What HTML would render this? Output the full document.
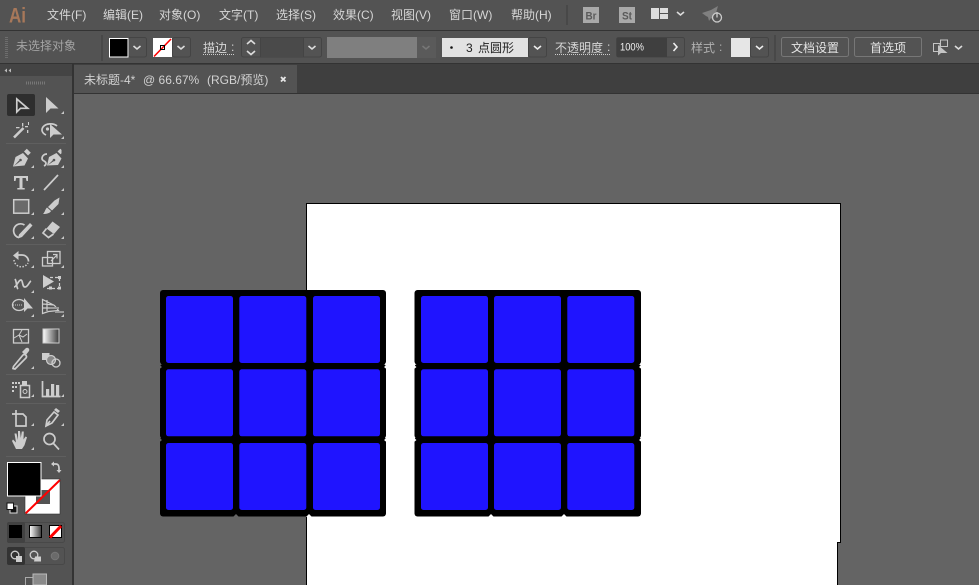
<!DOCTYPE html>
<html><head><meta charset="utf-8"><style>
html,body{margin:0;padding:0;width:979px;height:585px;overflow:hidden;background:#646464}
svg{display:block}
text{font-family:"Liberation Sans","Noto Sans CJK SC",sans-serif;font-size:12px;fill:#d6d6d6}
.o{fill:none;stroke:#cdcdcd;stroke-width:1.7}
.t{fill:none;stroke:#cdcdcd;stroke-width:1}
.c{fill:none;stroke:#dcdcdc;stroke-width:1.6}
.f{fill:#cdcdcd}
.h{fill:#535353}
.b{fill:#1f14ff}
.box{fill:none;stroke:#444;stroke-width:1}
</style></head><body>
<svg width="979" height="585" viewBox="0 0 979 585" xmlns="http://www.w3.org/2000/svg">
<defs>
<linearGradient id="g" x1="0" x2="1" y1="0" y2="0"><stop offset="0" stop-color="#fff"/><stop offset="1" stop-color="#3a3a3a"/></linearGradient>
</defs>
<!-- bars -->
<rect width="979" height="585" fill="#646464"/>
<rect width="979" height="30" fill="#535353"/>
<rect y="30" width="979" height="1" fill="#333"/>
<rect y="31" width="979" height="33" fill="#535353"/>
<rect y="64" width="979" height="30" fill="#3f3f3f"/>
<rect y="63" width="979" height="1" fill="#333"/>
<rect x="74" y="65" width="223" height="28" fill="#535353"/>
<rect x="74" y="93" width="905" height="1" fill="#333"/>
<rect x="73" y="64" width="1" height="30" fill="#333"/>
<!-- artboard -->
<rect x="306" y="203" width="534.5" height="339" fill="#fff"/>
<rect x="306" y="542" width="532" height="43" fill="#fff"/>
<path d="M306.5 585V203.5H840.5V542.5H837.5V585" fill="none" stroke="#000"/>
<!-- grids -->
<g fill="#000">
<rect x="160" y="290" width="226" height="74.5" rx="3"/><rect x="160" y="364" width="226" height="74.5" rx="3"/><rect x="160" y="437" width="226" height="79.5" rx="3"/>
<rect x="414.500" y="290" width="226.500" height="74.5" rx="3"/><rect x="414.500" y="364" width="226.500" height="74.5" rx="3"/><rect x="414.500" y="437" width="226.500" height="79.5" rx="3"/>
</g>
<g class="b">
<rect x="166" y="296" width="67" height="67" rx="2.500"/><rect x="239.300" y="296" width="67" height="67" rx="2.500"/><rect x="313" y="296" width="67" height="67" rx="2.500"/>
<rect x="166" y="369.300" width="67" height="67" rx="2.500"/><rect x="239.300" y="369.300" width="67" height="67" rx="2.500"/><rect x="313" y="369.300" width="67" height="67" rx="2.500"/>
<rect x="166" y="443" width="67" height="67" rx="2.500"/><rect x="239.300" y="443" width="67" height="67" rx="2.500"/><rect x="313" y="443" width="67" height="67" rx="2.500"/>
<rect x="421" y="296" width="67" height="67" rx="2.500"/><rect x="494" y="296" width="67" height="67" rx="2.500"/><rect x="567.300" y="296" width="67" height="67" rx="2.500"/>
<rect x="421" y="369.300" width="67" height="67" rx="2.500"/><rect x="494" y="369.300" width="67" height="67" rx="2.500"/><rect x="567.300" y="369.300" width="67" height="67" rx="2.500"/>
<rect x="421" y="443" width="67" height="67" rx="2.500"/><rect x="494" y="443" width="67" height="67" rx="2.500"/><rect x="567.300" y="443" width="67" height="67" rx="2.500"/>
</g>
<path d="M233 517l3-3 3 3z" fill="#646464"/>
<path d="M306 517l3-3 3 3z" fill="#fff"/>
<path d="M488 517l3-3 3 3zM561 517l3-3 3 3zM642 364.500l-3 2.500 3 2.500zM642 437.500l-3 2.500 3 2.500zM387 364.500l-3 2.500 3 2.500zM387 437.500l-3 2.500 3 2.500zM413.500 364.500l3 2.500-3 2.500zM413.500 437.500l3 2.500-3 2.500z" fill="#fff"/>
<path d="M159 364.500l3 2.500-3 2.500zM159 437.500l3 2.500-3 2.500z" fill="#646464"/>
<!-- left panel -->
<rect x="0" y="64" width="72" height="521" fill="#535353"/>
<rect x="0" y="64" width="72" height="12" fill="#444"/>
<rect x="72" y="64" width="2" height="521" fill="#333"/>
<path d="M7 68.500l-2.500 2 2.500 2zM11 68.500l-2.500 2 2.500 2z" fill="#bbb"/>
<path d="M26 83h19" stroke="#777" stroke-width="3" stroke-dasharray="1 1"/>
<rect x="7" y="94" width="28" height="22" rx="2" fill="#2e2e2e"/>
<g stroke="#5f5f5f"><path d="M6 143.500h60M6 244.500h60M6 321.500h60M6 374.500h60M6 403.500h60M6 456.500h60"/></g>
<!-- selection -->
<path class="o" d="M16.800 99v13l3.700-3.700h7.200z" stroke-width="1.500"/>
<path class="f" d="M46 97v16l4.500-4.500H58.500z"/>
<!-- wand -->
<path d="M14 137.500l9.500-9.500" stroke="#cdcdcd" stroke-width="2.600" fill="none"/>
<path class="f" d="M22 123h1.300v3.500H22zM28 122h1v3h-1zM27 130h1.300v3H27zM16 127h3.500v1.200H16zM25 126h3v1.200h-3z"/>
<!-- lasso -->
<path class="o" d="M46 135c-4-2-5-5-3-8 3-4 11-4 14-1" stroke-width="1.500"/>
<path class="f" d="M50 124v14l3.500-3.500H62z"/><circle cx="47.500" cy="129" r="1.600" fill="#cdcdcd"/>
<!-- pen -->
<path class="f" d="M13 166.500L15.500 157 23 153l5 5.500-3.500 7z"/>
<path class="h" d="M14 166l5-5.500 1 1z"/><circle class="h" cx="20.500" cy="160" r="1.300"/>
<path class="f" d="M24 151.500l2.800-2.800 4 4-2.800 2.800z"/>
<path class="f" d="M47 165.500L49 157l7.500-4 5 5.500-3.500 6.500z"/>
<path class="h" d="M48 165l5-5 1 1z"/><circle class="h" cx="54" cy="160" r="1.300"/>
<path class="f" d="M57.500 151.500l2.800-2.800 1.200 1.200v3.500l-1 .8z"/>
<path class="o" d="M47 154c-3 0-5 2-5 4.500 0 3 4 2 4 5 0 1-1 2-2 2.500" stroke-width="1.200"/>
<!-- type / line -->
<path class="f" d="M14 176h14v5h-1.500l-.7-3H22.500v10h2.200v1.500h-7.400V188h2.200V178h-3.300l-.7 3H14z"/>
<path class="o" d="M44 190l14-15" stroke-width="1.700"/>
<!-- rect / brush -->
<rect x="13.700" y="199.700" width="15" height="13.500" fill="#6a6a6a" stroke="#cdcdcd" stroke-width="1.500"/>
<path class="f" d="M59.500 197.500L58.500 204l-6.500 6.500-4-3.500 6.500-6.500z"/><path class="f" d="M47 207.500l4 3.500c-1 2-4 3-8 3 2-2 2-4.500 4-6.500z"/>
<!-- blob / eraser -->
<path class="o" d="M24.500 225a7 7 0 1 0-6 12.500"/><path class="f" d="M30 223l2.500 2.500L22 237l-4 1.500 1-4z"/>
<path class="f" d="M52.500 221.500l7.500 5.500-6 7-7.500-5.500z"/><path class="o" d="M46.500 228.500l-3.500 4.500 5.500 4.500 5-3.500" stroke-width="1.400"/>
<!-- rotate / scale -->
<path class="o" d="M17 255h5a6.500 6.500 0 0 1 6.500 6.500"/><path class="f" d="M13 255.500l5.500-4.500v9z"/>
<path d="M14 260a7.500 7.500 0 0 0 14 3" fill="none" stroke="#cdcdcd" stroke-width="1.500" stroke-dasharray="1.500 1.500"/>
<rect x="42.500" y="257.500" width="10" height="8.500" class="t" style="stroke-width:1.300"/><rect x="47.500" y="251.500" width="12.500" height="12" class="t" style="stroke-width:1.300"/><path class="t" d="M51 261l6-6M53 254.500h4v4" style="stroke-width:1.200"/>
<!-- warp / free transform -->
<path class="o" d="M14 287c3 0 4-7 7-7 2 0 1 7 4 7 3 0 4-5 6-6M15 279c2 3 1 8 3 10"/>
<path class="f" d="M43 275v13l11-6.500z"/><path class="t" d="M50 277.500h9.500v11h-14" stroke-dasharray="3 2" style="stroke-width:1.200"/>
<rect x="58" y="276" width="3" height="3" class="f"/><rect x="58" y="286.500" width="3" height="3" class="f"/><rect x="49" y="286.500" width="3" height="3" class="f"/>
<!-- shape builder / perspective -->
<ellipse class="o" cx="19" cy="305" rx="6.500" ry="5.500" style="stroke-width:1.300"/><path class="f" d="M24 298v14l3.500-3.500H33z"/><path d="M13 305h10" stroke="#cdcdcd" stroke-dasharray="1 1"/>
<path class="t" d="M42.500 299.500v14l6-2 10-1-4-5zM47 300v11M43 308h15M43 304l11 1" style="stroke-width:1.200"/><path d="M50 307h9v2h-9zM55 311h9v2h-9z" fill="#999"/>
<!-- mesh / gradient -->
<rect x="13.500" y="329.500" width="15" height="13.500" class="t" style="stroke-width:1.300"/><path class="t" d="M14 338l5-3 3-5M19 335l4 2 4-3M19 335l3 7"/>
<rect x="43" y="329" width="16" height="14" fill="url(#g)" stroke="#cdcdcd"/>
<!-- eyedropper / blend -->
<path class="o" d="M13.500 366.500l-.5 2 2 .5 11-11c1.500-2-1-4.500-3-3z" stroke-width="1.500"/><path class="f" d="M22 352l4-4c2-1 4 1 3 3l-3.500 4.500z"/>
<rect x="42" y="353" width="7.500" height="7" class="f"/><circle cx="51" cy="360" r="4.500" fill="#888" stroke="#cdcdcd" stroke-width="1.200"/><circle cx="56" cy="363" r="4" class="t" style="stroke-width:1.300"/>
<!-- symbol / graph -->
<g class="f"><rect x="12" y="382" width="2" height="2"/><rect x="15" y="382" width="2" height="2"/><rect x="18" y="382" width="2" height="2"/><rect x="12" y="386" width="2" height="2"/><rect x="15" y="386" width="2" height="2"/><rect x="12" y="390" width="2" height="2"/></g>
<rect x="20.500" y="385.500" width="9" height="12" class="t" style="stroke-width:1.500"/><rect x="22" y="381" width="5" height="4" class="f"/><circle cx="25" cy="391.500" r="2" class="t"/>
<path class="o" d="M42.500 381v15.500h18" stroke-width="1.300"/><path class="f" d="M46 389h3.200v7H46zM51 384h3.200v12H51zM56 385h3.200v11H56z"/>
<!-- artboard / slice -->
<path class="o" d="M16 410v4M12 414h4M16 414h7l3 3v9H16v-12" stroke-width="1.400"/>
<path class="o" d="M46 426l1-6 7-8 4 3-6 8zM46 426l4-5" stroke-width="1.300"/><path class="f" d="M54 410l2-2 4 3-2 2z"/>
<!-- hand / zoom -->
<path class="f" d="M16 449l-4-8 1-1.500 3 3-1.500-9h2l1.500 6.500V431h2l.8 7 1-6.500h2l-.3 8 2-3 1.500.7-2.500 8-2.500 3.800z"/>
<circle class="o" cx="49.500" cy="439" r="5.500" stroke-width="1.500"/><path class="o" d="M53.500 443.500l5.500 6" stroke-width="2.200"/>
<!-- tool corner marks -->
<path d="M64 111v3h-3zM64 136v3h-3zM34 165v3h-3zM64 165v3h-3zM34 188v3h-3zM64 188v3h-3zM34 212v3h-3zM64 212v3h-3zM34 236v3h-3zM64 236v3h-3zM34 265v3h-3zM64 265v3h-3zM34 290v3h-3zM34 314v3h-3zM64 314v3h-3zM34 366v3h-3zM34 394v3h-3zM64 394v3h-3zM34 423v3h-3zM64 423v3h-3zM34 447v3h-3z" fill="#c8c8c8"/>
<!-- fill & stroke -->
<rect x="25" y="479" width="35" height="35" fill="#fff"/>
<rect x="36" y="490" width="14" height="14" fill="#535353"/>
<path d="M25.500 513.500L60 480" stroke="#f00" stroke-width="2"/>
<rect x="25" y="479" width="35" height="35" fill="none" stroke="#333" stroke-width=".6"/>
<rect x="7.500" y="462.500" width="33.500" height="33.500" fill="#000" stroke="#fff"/>
<path class="o" d="M52 464h4c2 0 3 2 3 4v3" stroke-width="1.400"/><path d="M54 461.500l-3 2.500 3 2.500zM56.500 470h5l-2.500 3z" fill="#ccc"/>
<rect x="10" y="506" width="7" height="7" fill="#111" stroke="#ddd"/><rect x="7" y="503" width="6.500" height="6.500" fill="#fff" stroke="#111"/>
<!-- modes -->
<rect x="7.500" y="522.500" width="57" height="20" rx="2" fill="none" stroke="#484848"/>
<rect x="7" y="522" width="18" height="21" rx="2" fill="#424242"/>
<rect x="9" y="525" width="13" height="13" fill="#000"/>
<rect x="29.500" y="525.500" width="12" height="12" fill="url(#g)" stroke="#000"/>
<rect x="49.500" y="525.500" width="12" height="12" fill="#fff" stroke="#000"/>
<path d="M50 537.500L61 526" stroke="#f00" stroke-width="3"/>
<rect x="7.500" y="547.500" width="57" height="17" rx="2" fill="none" stroke="#484848"/>
<rect x="7" y="547" width="18" height="18" rx="2" fill="#333"/>
<circle cx="15" cy="555" r="3.800" fill="none" stroke="#cdcdcd" stroke-width="1.300"/><rect x="16" y="556" width="6" height="6" class="f"/>
<circle cx="34" cy="555" r="3.800" fill="none" stroke="#cdcdcd" stroke-width="1.300"/><path class="f" d="M35 556.500h6v5h-7z"/>
<circle cx="55" cy="556" r="3.800" fill="#6a6a6a" stroke="#777"/>
<rect x="25.500" y="577.500" width="8" height="8" fill="none" stroke="#aaa"/><rect x="33" y="574" width="13.500" height="11" fill="#8a8a8a" stroke="#bbb"/>
<!-- menu -->
<text x="9" y="22.500" textLength="17" lengthAdjust="spacingAndGlyphs" style="font-size:21px;font-weight:bold;fill:#a8785a">Ai</text>
<text x="47" y="19">文件(F)</text><text x="103" y="19">编辑(E)</text><text x="159" y="19">对象(O)</text><text x="219" y="19">文字(T)</text><text x="276" y="19">选择(S)</text><text x="333" y="19">效果(C)</text><text x="391" y="19">视图(V)</text><text x="449" y="19">窗口(W)</text><text x="511" y="19">帮助(H)</text>
<rect x="566" y="5" width="2" height="20" fill="#484848"/>
<rect x="583" y="7" width="16" height="16" fill="#a9a9a9"/><text x="585.500" y="19.500" textLength="11" lengthAdjust="spacingAndGlyphs" style="font-size:11px;font-weight:bold;fill:#5a5a5a">Br</text>
<rect x="619" y="7" width="16" height="16" fill="#a9a9a9"/><text x="622" y="19.500" textLength="10" lengthAdjust="spacingAndGlyphs" style="font-size:11px;font-weight:bold;fill:#5a5a5a">St</text>
<path d="M651 8h8v11h-8zM660 8h8v5h-8zM660 14h8v5h-8z" fill="#ddd"/>
<path class="c" d="M677 12l3.500 3 3.500-3"/>
<path d="M702 13l9-3 7-4-2 7-3 7-2-2-2 3-1-4-2-1z" fill="#808080"/><circle cx="717" cy="17.500" r="4.500" fill="#535353" stroke="#ccc" stroke-width="1.300"/><path d="M717 12v5.500" stroke="#ccc" stroke-width="1.300"/>
<!-- options bar -->
<path d="M6.500 37v21" stroke="#6d6d6d" stroke-width="3" stroke-dasharray="1 1"/>
<text x="16" y="50" style="fill:#a4a4a4">未选择对象</text>
<rect x="101" y="35" width="2" height="26" fill="#484848"/>
<rect x="128.500" y="37.500" width="18" height="19.500" rx="2" class="box"/>
<rect x="109.500" y="38.500" width="18.500" height="18.500" fill="#000" stroke="#fff"/>
<path class="c" d="M133.500 46l3.500 3 3.500-3"/>
<rect x="172.500" y="37.500" width="18" height="19.500" rx="2" class="box"/>
<rect x="153" y="38" width="19" height="19" fill="#fff"/><path d="M154 56.500L171 39" stroke="#f00" stroke-width="1.600"/><rect x="160.500" y="45.500" width="4" height="4" fill="none" stroke="#000"/>
<path class="c" d="M177.500 46l3.500 3 3.500-3"/>
<text x="203" y="52">描边</text><text x="231" y="51">:</text><path d="M203 54.500h32" stroke="#ccc" stroke-dasharray="1 1"/>
<rect x="241.500" y="37.500" width="80" height="19.500" rx="2" class="box"/>
<rect x="260" y="38" width="43" height="19" fill="#4a4a4a"/>
<path d="M260.500 38v19M303.500 38v19" stroke="#444"/>
<path class="c" d="M247 44l4-3.500 4 3.500M247 51l4 3.500 4-3.500"/><path class="c" d="M308.500 46l3.500 3 3.500-3"/>
<rect x="327" y="37" width="90" height="21" fill="#7f7f7f"/><rect x="417" y="37" width="19" height="21" fill="#5a5a5a"/>
<path d="M422.500 46l3.500 3 3.500-3" fill="none" stroke="#777" stroke-width="1.500"/>
<rect x="442" y="38" width="86" height="19" fill="#e2e2e2"/>
<rect x="528.500" y="37.500" width="18" height="19.500" rx="2" class="box"/>
<circle cx="451.500" cy="47.500" r="1.300" fill="#111"/>
<text x="466" y="52" style="fill:#222">3</text><text x="478" y="52" style="fill:#222">点圆形</text>
<path class="c" d="M534 46l3.500 3 3.500-3" style="stroke:#eee"/>
<text x="555" y="52">不透明度</text><text x="607" y="51">:</text><path d="M555 54.500h56" stroke="#ccc" stroke-dasharray="1 1"/>
<rect x="616.500" y="37.500" width="68" height="19.500" rx="2" class="box"/><rect x="617" y="38" width="50" height="19" fill="#3f3f3f"/>
<text x="620" y="50.500" textLength="24" lengthAdjust="spacingAndGlyphs" style="font-size:11px;fill:#eee">100%</text>
<path d="M673.500 43l3.500 4-3.500 4" class="c" style="stroke:#eee"/>
<text x="691" y="52" style="fill:#b0b0b0">样式</text><text x="719" y="51" style="fill:#b0b0b0">:</text>
<rect x="750.500" y="37.500" width="18" height="19.500" rx="2" class="box"/><rect x="731" y="38" width="19" height="19" fill="#e6e6e6"/>
<path class="c" d="M756 46l3.500 3 3.500-3" style="stroke:#eee"/>
<rect x="774" y="35" width="2" height="26" fill="#484848"/>
<rect x="781.500" y="37.500" width="67" height="19" rx="2" fill="none" stroke="#777"/><text x="791" y="52" style="fill:#e4e4e4">文档设置</text>
<rect x="854.500" y="37.500" width="67" height="19" rx="2" fill="none" stroke="#777"/><text x="870" y="52" style="fill:#e4e4e4">首选项</text>
<rect x="933.500" y="43.500" width="6.500" height="8" fill="none" stroke="#c4c4c4"/><rect x="940.500" y="40" width="7" height="6.500" fill="none" stroke="#c4c4c4"/><path d="M938 45v10.500l3-2.500h6.500z" fill="#c4c4c4"/>
<path class="c" d="M955 46l3.500 3 3.500-3"/>
<!-- tab -->
<text x="84" y="84" style="fill:#d2d2d2">未标题-4*</text><text x="143" y="84" style="fill:#d2d2d2">@ 66.67%</text><text x="207" y="84" style="fill:#d2d2d2">(RGB/预览)</text>
<path d="M281 77l4.500 4.500M285.500 77L281 81.500" stroke="#e6e6e6" stroke-width="1.800"/>
</svg>
</body></html>
